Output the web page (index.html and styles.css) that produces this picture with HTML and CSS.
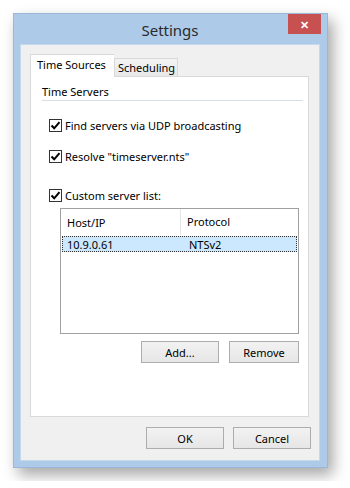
FILE: index.html
```html
<!DOCTYPE html>
<html lang="en">

<head>
    <meta charset="UTF-8">
    <title>Settings</title>
    <link rel="stylesheet" href="styles.css">
</head>

<body>

    <div class="window">
        <div class="titlebar">
            <span></span>
            <span class="title">Settings</span>
            <span class="close">&#x2715;</span>
        </div>

        <div class="client">
            <div class="tabs">
                <div class="tab active">Time Sources</div>
                <div class="tab">Scheduling</div>
            </div>

            <div class="panel">
                <div class="group-title">Time Servers</div>

                <label class="check first"><span class="box"><svg viewBox="0 0 11 11"><path d="M1.5 5.5 L4.2 8.3 L9.5 2.2"/></svg></span>Find servers via UDP broadcasting</label>
                <label class="check"><span class="box"><svg viewBox="0 0 11 11"><path d="M1.5 5.5 L4.2 8.3 L9.5 2.2"/></svg></span>Resolve "timeserver.nts"</label>
                <label class="check"><span class="box"><svg viewBox="0 0 11 11"><path d="M1.5 5.5 L4.2 8.3 L9.5 2.2"/></svg></span>Custom server list:</label>

                <div class="listbox">
                    <div class="list-head">
                        <span class="col-host">Host/IP</span>
                        <span class="col-proto">Protocol</span>
                    </div>
                    <div class="list-row selected">
                        <span class="col-host">10.9.0.61</span>
                        <span class="col-proto">NTSv2</span>
                    </div>
                </div>

                <div class="list-buttons">
                    <button class="button add">Add...</button>
                    <button class="button remove">Remove</button>
                </div>
            </div>

            <div class="dialog-buttons">
                <button class="button">OK</button>
                <button class="button">Cancel</button>
            </div>
        </div>
    </div>

</body>

</html>
```

FILE: styles.css
```css
body {
    margin: 0;
    padding: 13px;
    background-color: #fff;
    font-family: "Noto Sans", sans-serif;
    font-size: 11px;
    color: #000;
}

.window {
    width: 315px;
    height: 455px;
    box-sizing: border-box;
    display: flex;
    flex-direction: column;
    background-color: #adcae9;
    border: 1px solid #9ab7d8;
    padding: 0 7px 6px 6px;
    box-shadow: 5px 7px 14px rgba(0, 0, 0, 0.35);
}

.titlebar {
    height: 30px;
    display: grid;
    grid-template-columns: 1fr auto 1fr;
}

.title {
    align-self: center;
    font-size: 15px;
    color: #2b2b2b;
    padding-top: 2px;
}

.close {
    justify-self: end;
    width: 33px;
    height: 20px;
    margin-right: -1px;
    background-color: #c75050;
    color: #fff;
    font-size: 11px;
    font-weight: bold;
    display: flex;
    align-items: center;
    justify-content: center;
}

.client {
    flex: 1;
    background-color: #f0f0f0;
    border: 1px solid #c4d8ee;
    padding: 9px 10px 0 9px;
}

.tabs {
    display: flex;
    align-items: flex-end;
    height: 22px;
}

.tab {
    height: 18px;
    box-sizing: border-box;
    padding: 1px 3px 0 3px;
    border: 1px solid #d9d9d9;
    border-bottom: none;
    background: linear-gradient(#f3f3f3, #e8e8e8);
    line-height: 16px;
    width: 64px;
}

.tab.active {
    height: 23px;
    width: 84px;
    background: #fff;
    margin-bottom: -1px;
    padding: 2px 6px 0 6px;
    position: relative;
    z-index: 1;
    border-right: none;
}

.panel {
    height: 341px;
    box-sizing: border-box;
    border: 1px solid #d9d9d9;
    background-color: #fff;
    padding: 0 5px 0 11px;
}

.group-title {
    margin-top: 6px;
    height: 17px;
    line-height: 17px;
    border-bottom: 1px solid #d5dfe5;
    padding-bottom: 0;
}

.check {
    display: flex;
    align-items: center;
    margin-left: 7px;
    height: 16px;
    margin-top: 22px;
}

.check.first {
    margin-top: 16px;
}

.check + .check {
    margin-top: 15px;
}

.check + .check + .check {
    margin-top: 23px;
}

.box {
    width: 13px;
    height: 13px;
    box-sizing: border-box;
    border: 1px solid #333;
    background: #fff;
    margin-right: 3px;
    display: flex;
}

.box svg {
    width: 11px;
    height: 11px;
}

.box path {
    fill: none;
    stroke: #000;
    stroke-width: 2;
}

.listbox {
    margin: 5px 0 0 18px;
    width: 239px;
    height: 126px;
    box-sizing: border-box;
    border: 1px solid #a0a0a0;
    background: #fff;
    padding: 0 1px;
}

.list-head,
.list-row {
    display: flex;
}

.list-head {
    height: 26px;
    align-items: center;
}

.col-host {
    width: 118px;
    padding-left: 5px;
    box-sizing: border-box;
}

.col-proto {
    padding-left: 6px;
    border-left: 1px solid #e5e5e5;
}

.list-head .col-proto {
    line-height: 26px;
}

.list-row {
    height: 16px;
    align-items: center;
    background-color: #cce8ff;
    border: 1px dotted #333;
    box-sizing: border-box;
    margin-top: 1px;
}

.list-row .col-proto {
    border-left: none;
    padding-left: 8px;
}

.list-row .col-host {
    padding-left: 4px;
}

.list-buttons {
    display: flex;
    justify-content: flex-end;
    gap: 10px;
    margin-top: 7px;
    width: 257px;
}

.button {
    height: 22px;
    box-sizing: border-box;
    border: 1px solid #adadad;
    background: linear-gradient(#f2f2f2, #e6e6e6);
    font-family: "Noto Sans", sans-serif;
    font-size: 11px;
    color: #000;
    padding: 0;
    width: 78px;
}

.button.remove {
    width: 70px;
}

.dialog-buttons {
    display: flex;
    justify-content: flex-end;
    gap: 9px;
    margin-top: 10px;
    margin-right: -2px;
}
```
